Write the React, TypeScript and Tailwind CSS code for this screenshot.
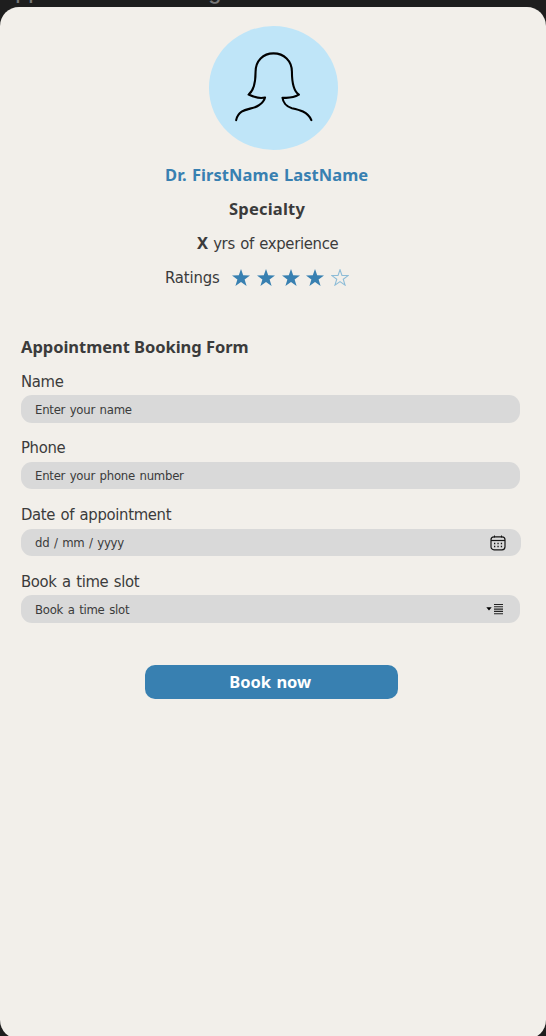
import React from "react";

const STAR = "M9 0 L11.2 6.3 L18 6.4 L12.6 10.5 L14.600 17 L9 13.1 L3.4 17 L5.4 10.500 L0 6.400 L6.8 6.300 Z";

function Star({ filled }: { filled: boolean }) {
  return (
    <svg className="h-[17px] w-[18px]" viewBox="0 0 18 17">
      {filled ? (
        <path d={STAR} fill="#3880b1" />
      ) : (
        <path d={STAR} fill="none" stroke="#8dbcd7" strokeWidth="1.2" transform="translate(0.9 0.8) scale(0.9)" />
      )}
    </svg>
  );
}

function Avatar() {
  return (
    <div className="mt-[19px] ml-[209px] h-[123.500px] w-[129px] rounded-[50%] bg-[#bfe5f8]">
      <svg viewBox="209 26 129 124" className="h-full w-full" fill="none" stroke="#000" strokeWidth="2.1" strokeLinecap="round" strokeLinejoin="round">
        <path d="M236 120.500 C239 107 252 111 259 105.500 Q264 102 265 97.800 C260 99 253 97 248.500 94.800 C255 90 255.500 80 255.500 72 C255.500 61 263 53.500 273.500 53.500 C284 53.500 292 61 292 72 C292 82 293 91 299 95 C294 98 288 98.500 282.500 98 C283 102 286 107 292 108.500 C299 110 308 112 311.500 120.500" />
      </svg>
    </div>
  );
}

function CalendarIcon() {
  return (
    <svg className="mt-px mr-[15px] h-4 w-4" viewBox="0 0 16 16" fill="none" stroke="#151515">
      <rect x="1" y="1.800" width="14" height="13" rx="3" strokeWidth="1.200" />
      <path d="M1 5.500 H15" strokeWidth="1.200" />
      <path d="M4.500 0.500 V2.500 M11.500 0.500 V2.500" strokeWidth="1" />
      <path d="M4 8.500 H12.500 M4 11.500 H12.500" strokeWidth="1.300" strokeDasharray="1.300 2.100" />
    </svg>
  );
}

function ListIcon() {
  return (
    <svg className="mr-[17px] h-3 w-[17px]" viewBox="0 0 17 12">
      <path d="M0.300 4.200 H5.700 L3 7.600 Z" fill="#000" />
      <path d="M8 1.500 H17 M8 3.800 H17 M8 6.100 H17 M8 8.400 H17 M8 10.700 H17" stroke="#222" strokeWidth="1.1" />
    </svg>
  );
}

function Field({ label, hint, icon, wide }: { label: string; hint: string; icon?: React.ReactNode; wide?: boolean }) {
  return (
    <div className="h-[66.800px]">
      <div className="flex h-[28px] items-center pt-[2px]">
        <span className="font-['DejaVu_Sans_Condensed','DejaVu_Sans',sans-serif] text-[16.500px] font-stretch-condensed tracking-[-0.33px] [word-spacing:1px]">{label}</span>
      </div>
      <div className={`flex h-[27.500px] items-center justify-between rounded-[11px] bg-[#d9d9d9] pl-[14px] ${wide ? "w-[500px]" : "w-[499px]"}`}>
        <span className="pt-px font-['DejaVu_Sans_Condensed','DejaVu_Sans',sans-serif] text-[13px] font-stretch-condensed tracking-[-0.25px] [word-spacing:1.1px]">{hint}</span>
        {icon}
      </div>
    </div>
  );
}

export default function App() {
  return (
    <div className="flex h-[1036px] w-[546px] flex-col overflow-hidden bg-[#1e1e1e] font-['Noto_Sans','Open_Sans',sans-serif] whitespace-nowrap text-[#3b3b3b]">
      <div className="relative h-[7px] shrink-0">
        <span className="absolute top-[-21px] left-0 font-['Inter',sans-serif] text-[21px] leading-[26px] font-medium tracking-[0.25px] text-[#777777]">Appointment Booking</span>
      </div>
      <main className="relative flex h-[1032px] shrink-0 flex-col rounded-[19px] bg-[#f2efea]">
        <Avatar />
        <div className="mt-[8px] flex h-[34.500px] items-center pt-px pl-[165px]">
          <h1 className="text-[16.500px] font-bold tracking-[0.06px] text-[#3880b1] [word-spacing:1px]">Dr. FirstName LastName</h1>
        </div>
        <div className="flex h-[34.500px] items-center pl-[229px]">
          <span className="text-[16.500px] font-bold tracking-[0.2px]">Specialty</span>
        </div>
        <div className="flex h-[34.500px] items-center pt-px pl-[197px]">
          <span className="font-['DejaVu_Sans_Condensed','DejaVu_Sans',sans-serif] text-[16.500px] font-stretch-condensed tracking-[-0.32px] [word-spacing:1px]"><b className="font-['Noto_Sans',sans-serif]">X</b> yrs of experience</span>
        </div>
        <div className="flex h-[34.500px] items-center pl-[165px]">
          <span className="w-[67px] pt-px font-['DejaVu_Sans_Condensed','DejaVu_Sans',sans-serif] text-[16.500px] font-stretch-condensed tracking-[-0.15px]">Ratings</span>
          <div className="flex gap-[6.800px] pb-[2px]">
            {[1, 2, 3, 4, 5].map((n) => (
              <Star key={n} filled={n < 5} />
            ))}
          </div>
        </div>
        <section className="mt-[34px] pl-[21px]">
          <h2 className="flex h-[37.500px] items-center pb-[1.500px] text-[16.500px] font-bold tracking-[-0.04px]">Appointment Booking Form</h2>
          <Field label="Name" hint="Enter your name" />
          <Field label="Phone" hint="Enter your phone number" />
          <Field label="Date of appointment" hint="dd / mm / yyyy" icon={<CalendarIcon />} wide />
          <Field label="Book a time slot" hint="Book a time slot" icon={<ListIcon />} />
        </section>
        <button className="mt-[31px] ml-[145px] h-[34px] w-[252.500px] shrink-0 rounded-[10px] bg-[#3880b1] pr-[2px] text-[16.500px] font-bold text-white [word-spacing:1px]">Book now</button>
      </main>
    </div>
  );
}
